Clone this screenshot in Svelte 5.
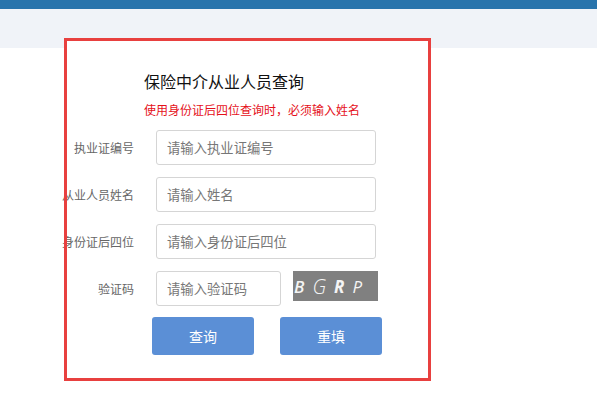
<script>
    const fields = [
        { label: "执业证编号", placeholder: "请输入执业证编号" },
        { label: "从业人员姓名", placeholder: "请输入姓名" },
        { label: "身份证后四位", placeholder: "请输入身份证后四位" },
    ];
    const captcha = [
        { ch: "B", weight: "bold" },
        { ch: "G", weight: "big" },
        { ch: "R", weight: "heavy" },
        { ch: "P", weight: "" },
    ];
</script>

<div class="page">
    <div class="topbar"></div>
    <div class="subbar"></div>
    <form class="panel" on:submit|preventDefault>
        <h1>保险中介从业人员查询</h1>
        <p class="hint">使用身份证后四位查询时，必须输入姓名</p>
        {#each fields as f}
            <div class="row">
                <span class="label">{f.label}</span>
                <input type="text" placeholder={f.placeholder} />
            </div>
        {/each}
        <div class="row">
            <span class="label">验证码</span>
            <input class="short" type="text" placeholder="请输入验证码" />
            <div class="captcha">
                {#each captcha as c}
                    <span class={c.weight}>{c.ch}</span>
                {/each}
            </div>
        </div>
        <div class="buttons">
            <button type="submit">查询</button>
            <button type="reset">重填</button>
        </div>
    </form>
    <div class="highlight"></div>
</div>

<style>
    :global(body) {
        margin: 0;
        background: #fff;
    }

    .page {
        position: relative;
        width: 597px;
        height: 400px;
        overflow: hidden;
        font-family: "Noto Sans CJK SC", "Liberation Sans", sans-serif;
    }

    .topbar {
        height: 9px;
        background: #2874ac;
    }

    .subbar {
        height: 39px;
        background: #f0f3f8;
    }

    .panel {
        width: 366px;
        margin-left: 65px;
        margin-top: -10px;
        padding-top: 32px;
        background: #fff;
        display: flex;
        flex-direction: column;
    }

    h1 {
        margin: 0 0 0 79px;
        font-size: 16px;
        line-height: 22px;
        font-weight: 400;
        color: #111;
    }

    .hint {
        margin: 10px 0 12px 79px;
        font-size: 12px;
        line-height: 16px;
        color: #e5101a;
    }

    .row {
        display: flex;
        align-items: flex-start;
        height: 35px;
        margin-bottom: 12px;
    }

    .row:nth-last-child(2) {
        margin-bottom: 11px;
    }

    .label {
        width: 69px;
        flex: none;
        text-align: right;
        font-size: 12px;
        line-height: 35px;
        color: #666;
        white-space: nowrap;
        direction: rtl;
    }

    input {
        box-sizing: border-box;
        width: 220px;
        height: 35px;
        margin-left: 22px;
        padding: 0 10px;
        border: 1px solid #d5d5d5;
        border-radius: 3px;
        font: inherit;
        font-size: 13.33px;
        background: #fff;
        outline: none;
    }

    input::placeholder {
        color: #777;
        opacity: 1;
    }

    input.short {
        width: 125px;
    }

    .captcha {
        width: 85px;
        height: 30px;
        margin-left: 12px;
        background: #808080;
        color: #f4f4f4;
        display: flex;
        align-items: center;
        gap: 8px;
        padding-left: 1px;
        box-sizing: border-box;
        font-family: "Open Sans", "Liberation Sans", sans-serif;
        font-size: 17px;
        font-style: italic;
    }

    .captcha .bold {
        font-weight: 600;
    }

    .captcha .heavy {
        font-weight: 700;
    }

    .captcha .big {
        font-size: 20px;
        font-weight: 300;
    }

    .buttons {
        display: flex;
        gap: 26px;
        margin-left: 87px;
    }

    button {
        width: 102px;
        height: 38px;
        border: 0;
        border-radius: 3px;
        background: #5b8fd6;
        color: #fff;
        font: inherit;
        font-size: 14px;
        padding: 0;
    }

    /* red annotation frame on top of the form */
    .highlight {
        position: absolute;
        left: 64px;
        top: 38px;
        width: 361px;
        height: 337px;
        border: 3px solid #e8403f;
        pointer-events: none;
    }
</style>
